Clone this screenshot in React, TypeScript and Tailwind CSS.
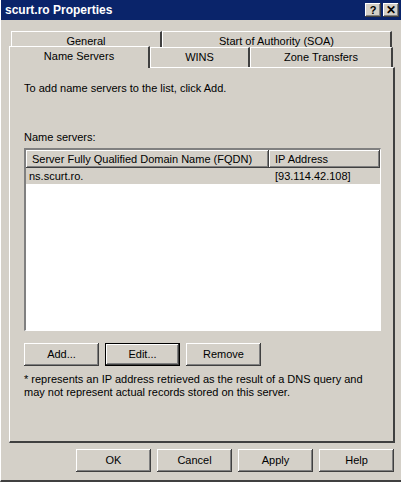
const raised =
  "bg-[#d4d0c8] shadow-[inset_-1px_-1px_#404040,inset_1px_1px_#ffffff,inset_-2px_-2px_#808080]";

const Btn = ({ label, def = false }: { label: string; def?: boolean }) => (
  <div
    className={
      def
        ? "flex h-[23px] w-[75px] items-center justify-center border border-black bg-[#d4d0c8] shadow-[inset_-1px_-1px_#404040,inset_1px_1px_#ffffff,inset_-2px_-2px_#808080]"
        : `flex h-[23px] w-[75px] items-center justify-center ${raised}`
    }
  >
    {label}
  </div>
);

const Tab = ({ label, w, active = false }: { label: string; w: string; active?: boolean }) => (
  <div
    className={`${w} flex items-center justify-center border-l border-t border-white border-r-2 border-r-[#404040] bg-[#d4d0c8] ${
      active ? "relative z-10 -mb-px -mt-[2px] h-[22px] pb-[3px]" : "h-[20px]"
    }`}
  >
    {label}
  </div>
);

export default function App() {
  return (
    <div
      className="flex h-[482px] w-[401px] flex-col whitespace-nowrap border-b-2 border-b-[#404040] border-l border-l-[#ffffff] bg-[#d4d0c8] text-[11px] text-black"
      style={{ fontFamily: "'Liberation Sans', Arial, sans-serif" }}
    >
      {/* title bar */}
      <div className="flex h-[20px] items-center justify-between bg-[#0a246a] pl-[4px] pr-[2px]">
        <span className="text-[12px] font-bold text-white">scurt.ro Properties</span>
        <div className="flex gap-[2px]">
          <div className={`flex h-[14px] w-[16px] items-center justify-center text-[11px] font-bold ${raised}`}>?</div>
          <div className={`flex h-[14px] w-[16px] items-center justify-center text-[12px] font-bold ${raised}`}>✕</div>
        </div>
      </div>

      {/* tabs */}
      <div className="mt-[11px] flex pl-[10px]">
        <Tab label="General" w="w-[151px]" />
        <Tab label="Start of Authority (SOA)" w="w-[230px]" />
      </div>
      <div className="-mt-[4px] flex items-end pl-[8px]">
        <Tab label="Name Servers" w="w-[141px]" active />
        <Tab label="WINS" w="w-[100px]" />
        <Tab label="Zone Transfers" w="w-[143px]" />
      </div>

      {/* panel */}
      <div className="ml-[8px] mr-[6px] flex h-[376px] flex-col border-l border-t border-white border-r-2 border-b-2 border-r-[#404040] border-b-[#404040] pl-[14px] pr-[12px]">
        <div className="mt-[12px]">To add name servers to the list, click Add.</div>
        <div className="mt-[32px]">Name servers:</div>
        <div className="mt-[3px] flex h-[183px] flex-col border-l-2 border-t-2 border-b border-r border-l-[#808080] border-t-[#808080] border-b-white border-r-white bg-white">
          <div className="flex h-[18px]">
            <div className={`flex w-[243px] items-center pl-[6px] ${raised}`}>Server Fully Qualified Domain Name (FQDN)</div>
            <div className={`flex flex-1 items-center pl-[6px] ${raised}`}>IP Address</div>
          </div>
          <div className="flex h-[16px] items-center bg-[#d4d0c8]">
            <div className="w-[243px] pl-[3px]">ns.scurt.ro.</div>
            <div className="pl-[6px]">[93.114.42.108]</div>
          </div>
        </div>
        <div className="mt-[12px] flex gap-[6px]">
          <Btn label="Add..." />
          <Btn label="Edit..." def />
          <Btn label="Remove" />
        </div>
        <div className="mt-[7px] leading-[13px]">
          * represents an IP address retrieved as the result of a DNS query and
          <br />
          may not represent actual records stored on this server.
        </div>
      </div>

      {/* bottom buttons */}
      <div className="mt-[6px] flex justify-end gap-[6px] pr-[7px]">
        <Btn label="OK" />
        <Btn label="Cancel" />
        <Btn label="Apply" />
        <Btn label="Help" />
      </div>
    </div>
  );
}
